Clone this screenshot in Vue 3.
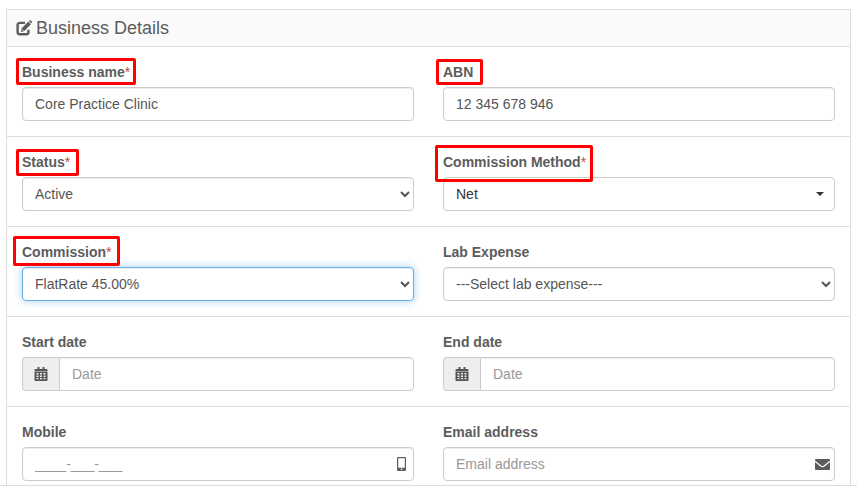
<script setup>
import { ref } from 'vue'

const businessName = ref('Core Practice Clinic')
const abn = ref('12 345 678 946')
const status = ref('Active')
const commission = ref('FlatRate 45.00%')
const labExpense = ref('')
const startDate = ref('')
const endDate = ref('')
const mobile = ref('')
const email = ref('')
</script>

<template>
  <main class="page">
    <section class="panel">
      <header class="panel-head">
        <svg class="edit-icon" viewBox="0 0 16 16" aria-hidden="true">
          <path d="M9 2.900H3.600A2 2 0 0 0 1.600 4.900V12.300A2 2 0 0 0 3.600 14.300H10.400A2 2 0 0 0 12.400 12.300V9.800" fill="none" stroke="currentColor" stroke-width="2.400" />
          <path d="M12.300 1.600 15 4.300 8.300 11 4.800 12 5.800 8.200z" fill="currentColor" />
          <path d="M13 .9 13.700.3Q14.200 0 14.700.4L15.900 1.600Q16.200 2.100 15.900 2.600L15.400 3.400z" fill="currentColor" />
          <path d="M6.300 9.400 7.500 10.600" stroke="#fafafa" stroke-width=".8" />
        </svg>
        <h1>Business Details</h1>
      </header>

      <form @submit.prevent>
        <div class="row">
          <div class="field">
            <label class="caption" for="business-name">Business name<span class="required">*</span><i class="mark mark-name"></i></label>
            <input id="business-name" v-model="businessName" class="control" type="text" />
          </div>
          <div class="field">
            <label class="caption" for="abn">ABN<i class="mark mark-abn"></i></label>
            <input id="abn" v-model="abn" class="control" type="text" />
          </div>
        </div>

        <div class="row">
          <div class="field">
            <label class="caption" for="status">Status<span class="required">*</span><i class="mark mark-status"></i></label>
            <select id="status" v-model="status" class="control">
              <option>Active</option>
              <option>Inactive</option>
            </select>
          </div>
          <div class="field">
            <label class="caption" for="method">Commission Method<span class="required">*</span><i class="mark mark-method"></i></label>
            <button id="method" class="control picker" type="button" aria-haspopup="listbox">
              <span>Net</span>
              <span class="caret"></span>
            </button>
          </div>
        </div>

        <div class="row">
          <div class="field">
            <label class="caption" for="commission">Commission<span class="required">*</span><i class="mark mark-commission"></i></label>
            <select id="commission" v-model="commission" class="control active">
              <option>FlatRate 45.00%</option>
            </select>
          </div>
          <div class="field">
            <label class="caption" for="lab">Lab Expense</label>
            <select id="lab" v-model="labExpense" class="control">
              <option value="">---Select lab expense---</option>
            </select>
          </div>
        </div>

        <div class="row">
          <div class="field">
            <label class="caption" for="start">Start date</label>
            <div class="group">
              <span class="addon">
                <svg class="calendar" viewBox="0 0 13 14" aria-hidden="true">
                  <path fill="currentColor" fill-rule="evenodd" d="M3 0h2v2h3V0h2v2h2q1 0 1 1v1.500H0V3q0-1 1-1h2zM0 5h13v8q0 1-1 1H1q-1 0-1-1zM2 6v1.500h2V6zM5.500 6v1.500h2V6zM9 6v1.500h2V6zM2 8.500V10h2V8.500zM5.500 8.500V10h2V8.500zM9 8.500V10h2V8.500zM2 11v1.200h2V11zM5.500 11v1.200h2V11zM9 11v1.200h2V11z" />
                </svg>
              </span>
              <input id="start" v-model="startDate" class="control" type="text" placeholder="Date" />
            </div>
          </div>
          <div class="field">
            <label class="caption" for="end">End date</label>
            <div class="group">
              <span class="addon">
                <svg class="calendar" viewBox="0 0 13 14" aria-hidden="true">
                  <path fill="currentColor" fill-rule="evenodd" d="M3 0h2v2h3V0h2v2h2q1 0 1 1v1.500H0V3q0-1 1-1h2zM0 5h13v8q0 1-1 1H1q-1 0-1-1zM2 6v1.500h2V6zM5.500 6v1.500h2V6zM9 6v1.500h2V6zM2 8.500V10h2V8.500zM5.500 8.500V10h2V8.500zM9 8.500V10h2V8.500zM2 11v1.200h2V11zM5.500 11v1.200h2V11zM9 11v1.200h2V11z" />
                </svg>
              </span>
              <input id="end" v-model="endDate" class="control" type="text" placeholder="Date" />
            </div>
          </div>
        </div>

        <div class="row">
          <div class="field">
            <label class="caption" for="mobile">Mobile</label>
            <div class="group">
              <input id="mobile" v-model="mobile" class="control" type="tel" placeholder="____-___-___" />
              <svg class="inside phone" viewBox="0 0 9 14" aria-hidden="true">
                <path fill="currentColor" fill-rule="evenodd" d="M1.200 0h6.600Q9 0 9 1.200v11.600Q9 14 7.800 14H1.200Q0 14 0 12.800V1.200Q0 0 1.200 0zM1.200 1.200v9.600h6.600V1.200zM4.500 11.600a.8.8 0 1 0 0 1.600.8.8 0 1 0 0-1.600z" />
              </svg>
            </div>
          </div>
          <div class="field">
            <label class="caption" for="email">Email address</label>
            <div class="group">
              <input id="email" v-model="email" class="control" type="email" placeholder="Email address" />
              <svg class="inside mail" viewBox="0 0 15 11" aria-hidden="true">
                <rect width="15" height="11" rx="1" fill="currentColor" />
                <path d="M0 2.200 5.800 7Q7.500 8.200 9.200 7L15 2.200" fill="none" stroke="#fff" stroke-width="1.100" />
              </svg>
            </div>
          </div>
        </div>
      </form>
    </section>
  </main>
</template>

<style>
body {
  margin: 0;
  background: #fff;
}
</style>

<style scoped>
* {
  box-sizing: border-box;
}

.page {
  height: 100vh;
  overflow: hidden;
  padding: 9px 6px 0;
  border-bottom: 1px solid #dcdedd;
  color: #5c5c5c;
  font: 14px/20px "Liberation Sans", Arial, sans-serif;
}

.panel {
  border: 1px solid #ddd;
}

.panel-head {
  display: flex;
  align-items: center;
  gap: 4px;
  padding: 8px 9px;
  background: #fafafa;
  border-bottom: 1px solid #ddd;
}

.panel-head h1 {
  margin: 0;
  font-size: 18px;
  font-weight: 400;
  line-height: 20px;
}

.edit-icon {
  width: 16px;
  height: 16px;
}

.row {
  display: grid;
  grid-template-columns: 1fr 1fr;
  gap: 29px;
  padding: 15px;
  border-bottom: 1px solid #ddd;
}

.field {
  display: flex;
  flex-direction: column;
  align-items: flex-start;
  gap: 5px;
  min-width: 0;
}

.caption {
  position: relative;
  font-weight: 700;
}

.required {
  color: #c94442;
  font-weight: 400;
}

.mark {
  position: absolute;
  z-index: 1;
  border: 3px solid #ff0000;
  border-radius: 2px;
  pointer-events: none;
}

.mark-name {
  inset: -4px -6px -3px;
}

.mark-abn {
  inset: -3px -10px -3px -7px;
}

.mark-status {
  inset: -3px -9px -4px -6px;
}

.mark-method {
  inset: -7px -7px -10px -8px;
}

.mark-commission {
  inset: -6px -9px -4px;
}

.control {
  width: 100%;
  min-width: 0;
  height: 34px;
  margin: 0;
  padding: 6px 12px;
  border: 1px solid #ccc;
  border-radius: 4px;
  outline: 0;
  background-color: #fff;
  box-shadow: inset 0 1px 1px rgba(0, 0, 0, 0.075);
  color: #555;
  font: inherit;
}

select.control {
  padding: 6px 8px;
}

.control::placeholder {
  color: #999;
  opacity: 1;
}

.control:focus,
.control.active {
  border-color: #66afe9;
  box-shadow: inset 0 1px 1px rgba(0, 0, 0, 0.075), 0 0 8px rgba(102, 175, 233, 0.6);
}

.picker {
  display: flex;
  align-items: center;
  justify-content: space-between;
  padding: 6px 10px 6px 12px;
  box-shadow: none;
  color: #333;
}

.caret {
  border-top: 4px solid #333;
  border-right: 4px solid transparent;
  border-left: 4px solid transparent;
}

.group {
  position: relative;
  display: flex;
  width: 100%;
}

.addon {
  display: flex;
  flex: none;
  align-items: center;
  padding: 0 11px;
  border: 1px solid #ccc;
  border-right: 0;
  border-radius: 4px 0 0 4px;
  background: #eee;
  color: #555;
}

.addon + .control {
  border-radius: 0 4px 4px 0;
}

.calendar {
  width: 14px;
  height: 14px;
}

.inside {
  position: absolute;
  top: 0;
  bottom: 0;
  margin: auto 0;
}

.phone {
  right: 8px;
  width: 9px;
  height: 14px;
}

.mail {
  right: 5px;
  width: 15px;
  height: 11px;
}
</style>
